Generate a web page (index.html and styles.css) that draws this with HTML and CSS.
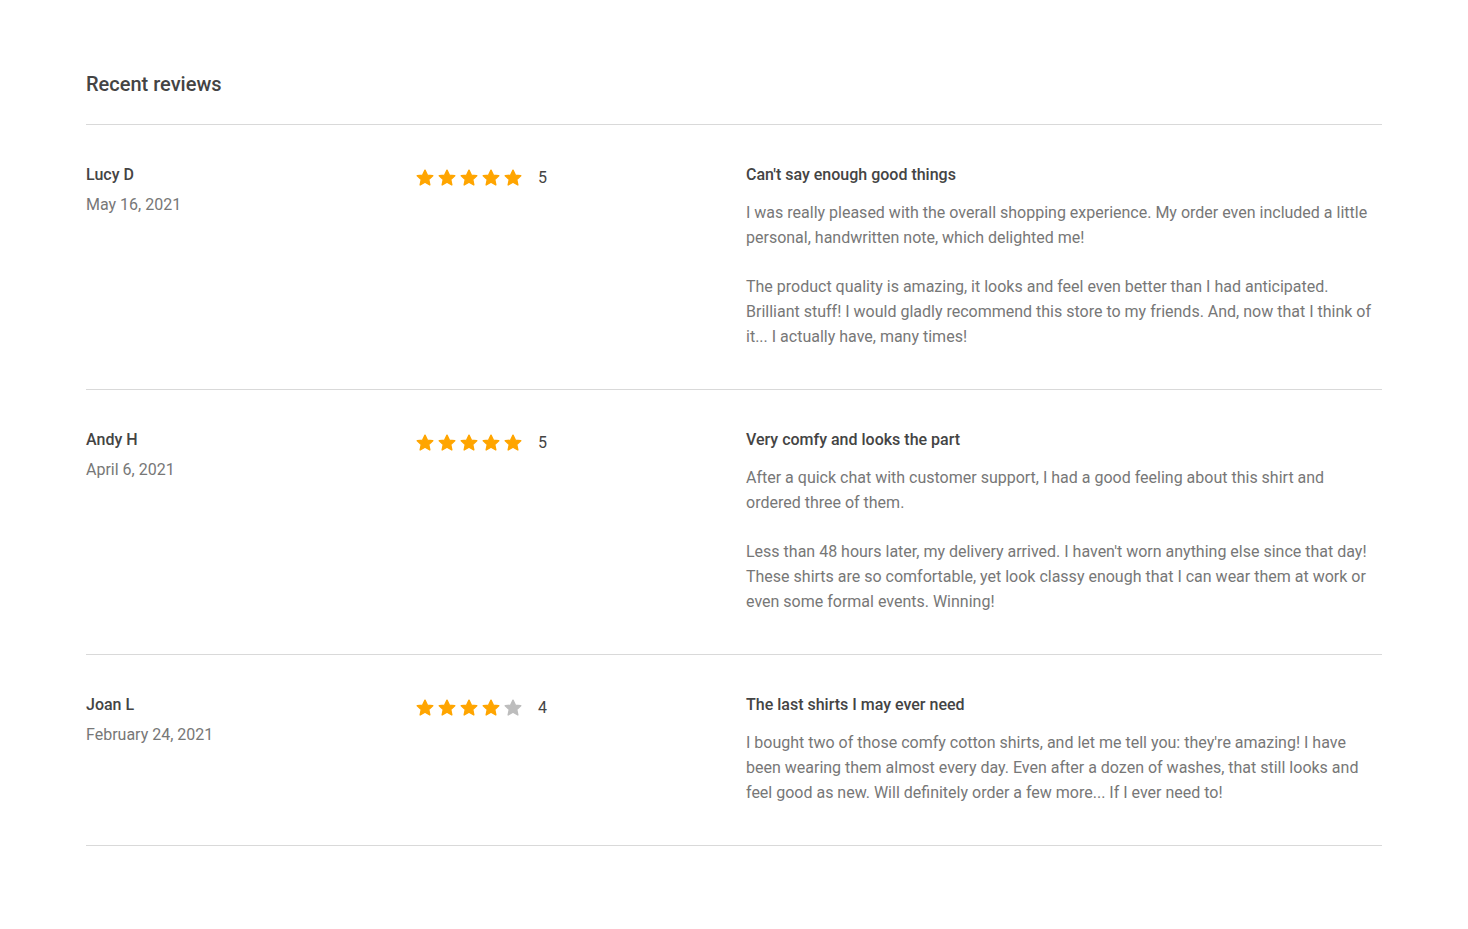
FILE: index.html
```html
<!DOCTYPE html>
<html lang="en">
<head>
<meta charset="utf-8">
<title>Recent reviews</title>
<link rel="stylesheet" href="styles.css">
</head>
<body>
<svg width="0" height="0" class="defs" aria-hidden="true">
  <defs>
    <symbol id="star" viewBox="1.5 1.5 21 21">
      <path d="M12 2.8l2.75 5.85 6.35.75-4.7 4.4 1.25 6.3L12 16.95 6.35 20.1l1.25-6.3-4.7-4.4 6.35-.75z"/>
    </symbol>
  </defs>
</svg>
<main class="reviews">
  <h2 class="reviews-title">Recent reviews</h2>

  <article class="review">
    <div class="author">
      <div class="author-name">Lucy D</div>
      <div class="author-date">May 16, 2021</div>
    </div>
    <div class="rating">
      <span class="stars">
        <svg class="star on"><use href="#star"/></svg>
        <svg class="star on"><use href="#star"/></svg>
        <svg class="star on"><use href="#star"/></svg>
        <svg class="star on"><use href="#star"/></svg>
        <svg class="star on"><use href="#star"/></svg>
      </span>
      <span class="rating-value">5</span>
    </div>
    <div class="content">
      <h3 class="content-title">Can't say enough good things</h3>
      <p>I was really pleased with the overall shopping experience. My order even included a little personal, handwritten note, which delighted me!</p>
      <p>The product quality is amazing, it looks and feel even better than I had anticipated. Brilliant stuff! I would gladly recommend this store to my friends. And, now that I think of it... I actually have, many times!</p>
    </div>
  </article>

  <article class="review">
    <div class="author">
      <div class="author-name">Andy H</div>
      <div class="author-date">April 6, 2021</div>
    </div>
    <div class="rating">
      <span class="stars">
        <svg class="star on"><use href="#star"/></svg>
        <svg class="star on"><use href="#star"/></svg>
        <svg class="star on"><use href="#star"/></svg>
        <svg class="star on"><use href="#star"/></svg>
        <svg class="star on"><use href="#star"/></svg>
      </span>
      <span class="rating-value">5</span>
    </div>
    <div class="content">
      <h3 class="content-title">Very comfy and looks the part</h3>
      <p>After a quick chat with customer support, I had a good feeling about this shirt and ordered three of them.</p>
      <p>Less than 48 hours later, my delivery arrived. I haven't worn anything else since that day! These shirts are so comfortable, yet look classy enough that I can wear them at work or even some formal events. Winning!</p>
    </div>
  </article>

  <article class="review">
    <div class="author">
      <div class="author-name">Joan L</div>
      <div class="author-date">February 24, 2021</div>
    </div>
    <div class="rating">
      <span class="stars">
        <svg class="star on"><use href="#star"/></svg>
        <svg class="star on"><use href="#star"/></svg>
        <svg class="star on"><use href="#star"/></svg>
        <svg class="star on"><use href="#star"/></svg>
        <svg class="star off"><use href="#star"/></svg>
      </span>
      <span class="rating-value">4</span>
    </div>
    <div class="content">
      <h3 class="content-title">The last shirts I may ever need</h3>
      <p>I bought two of those comfy cotton shirts, and let me tell you: they're amazing! I have been wearing them almost every day. Even after a dozen of washes, that still looks and feel good as new. Will definitely order a few more... If I ever need to!</p>
    </div>
  </article>
</main>
</body>
</html>
```

FILE: styles.css
```css
html, body {
  margin: 0;
  padding: 0;
  background: #ffffff;
}

body {
  font-family: Roboto, "Liberation Sans", Arial, sans-serif;
  color: #444444;
  -webkit-font-smoothing: antialiased;
}

.defs {
  position: absolute;
  width: 0;
  height: 0;
  overflow: hidden;
}

.reviews {
  width: 1296px;
  padding: 72px 86px 0;
  box-sizing: content-box;
}

.reviews-title {
  margin: 0;
  font-size: 20px;
  line-height: 24px;
  font-weight: 500;
  color: #444444;
  padding-bottom: 28px;
  border-bottom: 1px solid #d9d9d9;
}

.review {
  display: grid;
  grid-template-columns: 318px 318px 1fr;
  column-gap: 12px;
  padding: 40px 0 40px;
  border-bottom: 1px solid #d9d9d9;
}

.author-name {
  font-size: 16px;
  line-height: 20px;
  font-weight: 500;
  color: #444444;
}

.author-date {
  margin-top: 8px;
  font-size: 16px;
  line-height: 24px;
  color: #777777;
}

.rating {
  display: flex;
  align-items: center;
  align-self: start;
  gap: 16px;
  height: 26px;
}

.stars {
  display: flex;
  gap: 4px;
}

.star {
  width: 18px;
  height: 18px;
  display: block;
  stroke-width: 1.6;
  stroke-linejoin: round;
}

.star.on {
  fill: #ffa500;
  stroke: #ffa500;
}

.star.off {
  fill: #bdbdbd;
  stroke: #bdbdbd;
}

.rating-value {
  font-size: 16px;
  line-height: 20px;
  color: #444444;
}

.content-title {
  margin: 0 0 15px;
  font-size: 16px;
  line-height: 20px;
  font-weight: 500;
  color: #444444;
}

.content p {
  margin: 0 0 24px;
  font-size: 16px;
  line-height: 25px;
  color: #777777;
}

.content p:last-child {
  margin-bottom: 0;
}
```
